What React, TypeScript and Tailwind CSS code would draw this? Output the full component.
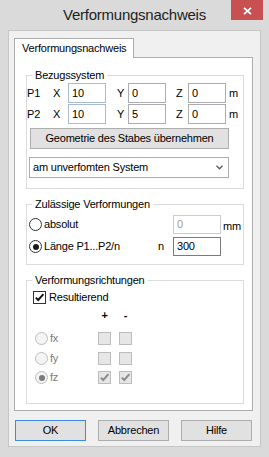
import React from "react";

function Radio({ checked = false, disabled = false }: { checked?: boolean; disabled?: boolean }) {
  return (
    <span
      className={
        "flex h-[13px] w-[13px] shrink-0 items-center justify-center rounded-full border " +
        (disabled ? "border-[#bcbcbc] bg-[#f4f4f4]" : "border-[#333333] bg-white")
      }
    >
      {checked && (
        <span className={"h-[6px] w-[6px] rounded-full " + (disabled ? "bg-[#7a7a7a]" : "bg-[#1a1a1a]")} />
      )}
    </span>
  );
}

function Check({ checked = false, disabled = false }: { checked?: boolean; disabled?: boolean }) {
  return (
    <span
      className={
        "flex h-[13px] w-[13px] shrink-0 items-center justify-center border " +
        (disabled ? "border-[#bcbcbc] bg-[#e6e6e6]" : "border-[#333333] bg-white")
      }
    >
      {checked && (
        <svg width="11" height="11" viewBox="0 0 11 11">
          <path
            d="M1.8 5.6 L4.2 8 L9.4 2.2"
            fill="none"
            stroke={disabled ? "#8a8a8a" : "#111111"}
            strokeWidth="1.9"
          />
        </svg>
      )}
    </span>
  );
}

function Field({ value, blue = false }: { value: string; blue?: boolean }) {
  return (
    <div
      className={
        "flex h-[20px] w-[38px] items-center border bg-white pl-[3px] " +
        (blue ? "border-[#a9bbd3]" : "border-[#abadb3]")
      }
    >
      {value}
    </div>
  );
}

export default function App() {
  return (
    <div className="flex h-[457px] w-[269px] flex-col overflow-hidden bg-[#dadada] font-['Liberation_Sans',Arial,sans-serif] text-[11px] leading-[13px] tracking-[-0.2px] text-black">
      {/* Title bar */}
      <div className="grid h-[30px] shrink-0 grid-cols-[1fr_auto_1fr]">
        <div />
        <div className="text-[15px] leading-[30px] tracking-[-0.25px] text-[#1e1e1e]">Verformungsnachweis</div>
        <div className="flex justify-end pr-[6px]">
          <div className="flex h-[20px] w-[32px] items-center justify-center bg-[#c75050] pt-[2px] pl-[1px]">
            <svg width="9" height="8" viewBox="0 0 9 8">
              <path d="M1 0.8 L8 7.2 M8 0.8 L1 7.2" stroke="#ffffff" strokeWidth="1.8" fill="none" />
            </svg>
          </div>
        </div>
      </div>

      {/* Client area */}
      <div className="mb-[10px] ml-[8px] flex w-[253px] flex-1 flex-col border border-[#c6c6c6] bg-[#f0f0f0] pl-[5px] pt-[7px]">
        {/* Tab */}
        <div className="relative z-10 -mb-px flex h-[20px] w-[120px] items-start border-x border-t border-[#adadad] bg-white pl-[7px] pt-[3px]">
          Verformungsnachweis
        </div>
        {/* Panel */}
        <div className="flex h-[354px] w-[239px] flex-col border border-[#adadad] bg-white pt-[10px]">
          {/* Group 1 */}
          <fieldset className="ml-[11px] w-[218px] border border-[#dcdcdc]">
            <legend className="ml-[5px] px-[3px] leading-[14px]">Bezugssystem</legend>
            <div className="flex flex-col pb-[10px] pt-[1px]">
              <div className="flex h-[20px] items-center">
                <span className="w-[26px]">P1</span>
                <span className="w-[15px]">X</span>
                <Field value="10" blue />
                <span className="ml-[11px] w-[11px]">Y</span>
                <Field value="0" />
                <span className="ml-[10px] w-[12px]">Z</span>
                <Field value="0" />
                <span className="ml-[3px]">m</span>
              </div>
              <div className="mt-[1px] flex h-[20px] items-center">
                <span className="w-[26px]">P2</span>
                <span className="w-[15px]">X</span>
                <Field value="10" blue />
                <span className="ml-[11px] w-[11px]">Y</span>
                <Field value="5" />
                <span className="ml-[10px] w-[12px]">Z</span>
                <Field value="0" />
                <span className="ml-[3px]">m</span>
              </div>
              <div className="ml-[3px] mt-[4px] flex h-[21px] w-[199px] items-center justify-center border border-[#adadad] bg-[#e1e1e1]">
                Geometrie des Stabes übernehmen
              </div>
              <div className="ml-[2px] mt-[8px] flex h-[21px] w-[200px] items-center justify-between border border-[#acacac] bg-white pl-[3px] pr-[5px]">
                <span>am unverfomten System</span>
                <svg width="7" height="5" viewBox="0 0 7 5">
                  <path d="M0.5 0.8 L3.5 3.8 L6.5 0.8" stroke="#5a5a5a" strokeWidth="1.3" fill="none" />
                </svg>
              </div>
            </div>
          </fieldset>

          {/* Group 2 */}
          <fieldset className="ml-[11px] mt-[8px] w-[218px] border border-[#dcdcdc]">
            <legend className="ml-[5px] px-[3px] leading-[14px]">Zulässige Verformungen</legend>
            <div className="flex flex-col pb-[8px] pl-[2px] pt-[4px]">
              <div className="flex h-[19px] items-center">
                <div className="flex w-[129px] items-center">
                  <Radio />
                  <span className="ml-[2px]">absolut</span>
                </div>
                <span className="w-[15px]" />
                <div className="flex h-[19px] w-[48px] items-center border border-[#cccccc] bg-white pl-[3px] text-[#a0a0a0]">
                  0
                </div>
                <span className="ml-[2px] pt-[4px]">mm</span>
              </div>
              <div className="mt-[3px] flex h-[19px] items-center">
                <div className="flex w-[129px] items-center">
                  <Radio checked />
                  <span className="ml-[2px]">Länge P1...P2/n</span>
                </div>
                <span className="w-[15px]">n</span>
                <div className="flex h-[19px] w-[48px] items-center border border-[#7a7a7a] bg-white pl-[3px]">
                  300
                </div>
              </div>
            </div>
          </fieldset>

          {/* Group 3 */}
          <fieldset className="ml-[11px] mt-[8px] w-[218px] border border-[#dcdcdc]">
            <legend className="ml-[5px] px-[3px] leading-[14px]">Verformungsrichtungen</legend>
            <div className="flex flex-col pb-[19px] pt-[4px]">
              <div className="flex h-[13px] items-center pl-[6px]">
                <Check checked />
                <span className="ml-[3px]">Resultierend</span>
              </div>
              <div className="mt-[5px] flex h-[13px] items-center pl-[8px] font-bold">
                <span className="w-[63px]" />
                <span className="w-[13px] text-center">+</span>
                <span className="ml-[8px] w-[13px] text-center">-</span>
              </div>
              <div className="mt-[10px] flex h-[13px] items-center pl-[8px]">
                <div className="flex w-[63px] items-center">
                  <Radio disabled />
                  <span className="ml-[2px] text-[#7a7a7a]">fx</span>
                </div>
                <Check disabled />
                <span className="w-[8px]" />
                <Check disabled />
              </div>
              <div className="mt-[7px] flex h-[13px] items-center pl-[8px]">
                <div className="flex w-[63px] items-center">
                  <Radio disabled />
                  <span className="ml-[2px] text-[#7a7a7a]">fy</span>
                </div>
                <Check disabled />
                <span className="w-[8px]" />
                <Check disabled />
              </div>
              <div className="mt-[6px] flex h-[13px] items-center pl-[8px]">
                <div className="flex w-[63px] items-center">
                  <Radio disabled checked />
                  <span className="ml-[2px] text-[#7a7a7a]">fz</span>
                </div>
                <Check disabled checked />
                <span className="w-[8px]" />
                <Check disabled checked />
              </div>
            </div>
          </fieldset>
        </div>

        {/* Buttons */}
        <div className="mt-[9px] flex gap-[12px] pl-[1px]">
          <div className="flex h-[21px] w-[71px] items-center justify-center border border-[#3c8be0] bg-[#e1e1e1]">OK</div>
          <div className="flex h-[21px] w-[71px] items-center justify-center border border-[#adadad] bg-[#e1e1e1]">Abbrechen</div>
          <div className="flex h-[21px] w-[71px] items-center justify-center border border-[#adadad] bg-[#e1e1e1]">Hilfe</div>
        </div>
      </div>
    </div>
  );
}
